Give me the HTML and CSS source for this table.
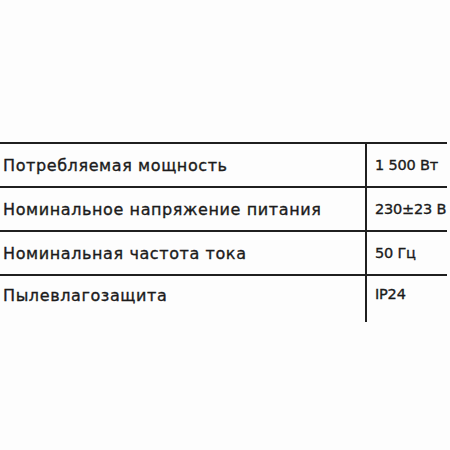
FILE: index.html
```html
<!DOCTYPE html>
<html lang="ru">
<head>
<meta charset="utf-8">
<link rel="stylesheet" href="styles.css">
</head>
<body>
<div class="page">
  <table class="spec">
    <tr><td class="name">Потребляемая мощность</td><td class="val">1 500 Вт</td></tr>
    <tr><td class="name">Номинальное напряжение питания</td><td class="val">230±23 В</td></tr>
    <tr><td class="name">Номинальная частота тока</td><td class="val">50 Гц</td></tr>
    <tr class="last"><td class="name">Пылевлагозащита</td><td class="val">IP24</td></tr>
  </table>
</div>
</body>
</html>
```
FILE: styles.css
```css
html, body {
  margin: 0;
  padding: 0;
  background: #fdfdfd;
}
.page {
  width: 450px;
  height: 450px;
  padding-top: 142px;
  box-sizing: border-box;
}
.spec {
  border-collapse: collapse;
  table-layout: fixed;
  width: 447px;
  font-family: "DejaVu Sans", "Noto Sans", sans-serif;
  font-weight: normal;
  color: #1b1b1b;
  white-space: nowrap;
  -webkit-text-stroke: 0.35px #1b1b1b;
}
.spec td {
  border-top: 2px solid #1f1f1f;
  height: 42px;
  padding: 0;
  vertical-align: middle;
}
.spec .name {
  width: 362px;
  padding-left: 3px;
  border-right: 2px solid #1f1f1f;
  font-size: 16px;
  letter-spacing: 0.6px;
}
.spec .val {
  padding-left: 8px;
  font-size: 14.5px;
  letter-spacing: -0.2px;
}
.spec .last td {
  height: 36px;
  vertical-align: top;
  padding-top: 10px;
}
```
